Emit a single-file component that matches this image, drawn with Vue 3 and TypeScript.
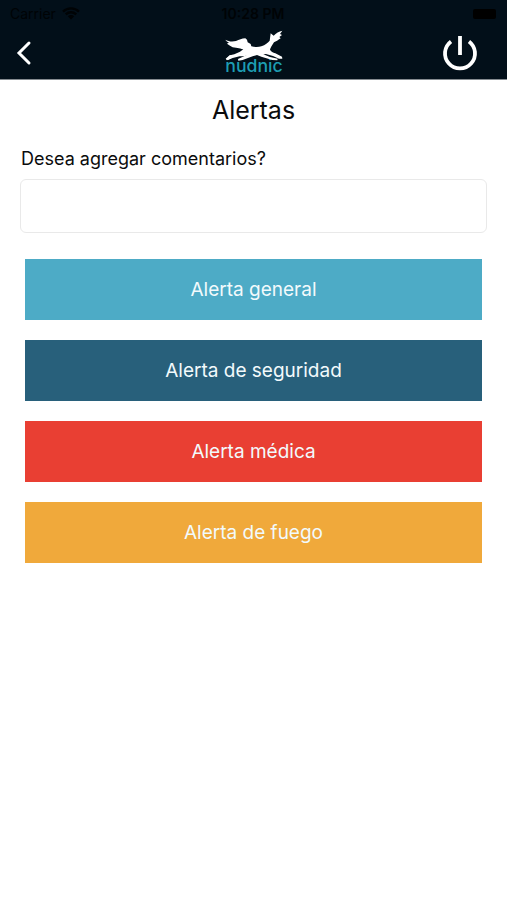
<script setup lang="ts">
import { ref } from 'vue'

interface AlertOption {
  id: string
  label: string
}

const comment = ref<string>('')

const alerts: AlertOption[] = [
  { id: 'general', label: 'Alerta general' },
  { id: 'security', label: 'Alerta de seguridad' },
  { id: 'medical', label: 'Alerta médica' },
  { id: 'fire', label: 'Alerta de fuego' },
]
</script>

<template>
  <div class="screen">
    <header class="header">
      <div class="status">
        <span class="carrier">
          Carrier
          <svg class="wifi" viewBox="0 0 18 13" aria-hidden="true">
            <path d="M1 4.6a11.5 11.5 0 0 1 16 0M3.8 7.4a7.5 7.5 0 0 1 10.4 0" />
            <path class="solid" d="M9 12.6 5.8 9.3a4.6 4.6 0 0 1 6.4 0z" />
          </svg>
        </span>
        <span class="time">10:28 PM</span>
        <span class="battery-slot"><span class="battery"></span></span>
      </div>
      <nav class="nav">
        <button class="icon-button" type="button" aria-label="Volver">
          <svg class="chevron" viewBox="0 0 16 26" aria-hidden="true">
            <path d="M13 3 3 13l10 10" />
          </svg>
        </button>
        <svg class="logo" viewBox="42 26 180 150" role="img" aria-label="nudnic">
          <text class="wordmark" x="132" y="158" text-anchor="middle">nudnic</text>
          <path
            class="fox"
            d="M46 61C56 67 68 67 78 65C88 62 95 57 106 57L111 61L113 69L122 74L124 81C134 84 146 84 154 81C166 77 174 70 179 64L182 42L191 49C198 41 207 36 217 34L210 44L216 47L208 53L212 57C204 63 198 66 192 69C186 78 181 86 180 91C183 97 189 100 196 102L216 112L217 118L207 118L189 110L168 104L160 105L180 113L203 118L202 123L187 122L154 112L141 107C132 110 124 110 117 107C109 109 100 111 89 111L68 116L54 122L48 119L60 108L73 105L90 97L100 90C93 89 88 86 83 86L68 84L60 79L51 73L57 69C52 68 49 66 46 61Z"
          />
          <path class="fox" d="M60 107 47 118 51 123 70 113zM118 103 84 119 85 124 98 122 136 108z" />
        </svg>
        <button class="icon-button" type="button" aria-label="Salir">
          <svg class="power" viewBox="0 0 36 36" aria-hidden="true">
            <path d="M9 6.4a15 15 0 1 0 18 0M18 1v19" />
          </svg>
        </button>
      </nav>
    </header>

    <main class="content">
      <h1 class="title">Alertas</h1>
      <label class="label" for="comment">Desea agregar comentarios?</label>
      <input id="comment" v-model="comment" class="field" type="text" />
      <div class="alerts">
        <button
          v-for="alert in alerts"
          :key="alert.id"
          class="alert"
          :class="alert.id"
          type="button"
        >
          {{ alert.label }}
        </button>
      </div>
    </main>
  </div>
</template>

<style>
body {
  margin: 0;
  background: #fff;
}
</style>

<style scoped>
.screen {
  min-height: 100vh;
  font-family: Inter, 'Liberation Sans', sans-serif;
  color: #0b0b0c;
  background: #fff;
}

.header {
  background: #020f19;
  border-bottom: 1px solid #858b90;
}

.status {
  display: grid;
  grid-template-columns: 1fr auto 1fr;
  align-items: center;
  height: 27px;
  padding: 0 11px 0 10px;
  font-size: 14px;
  color: #000305;
}

.carrier {
  display: flex;
  align-items: center;
  gap: 6px;
}

.wifi {
  width: 18px;
  height: 13px;
  fill: none;
  stroke: currentColor;
  stroke-width: 2.4;
}

.wifi .solid {
  fill: currentColor;
  stroke: none;
}

.time {
  font-weight: 600;
}

.battery-slot {
  display: flex;
  justify-content: flex-end;
}

.battery {
  width: 23px;
  height: 10px;
  border-radius: 2px;
  background: #000;
}

.nav {
  display: grid;
  grid-template-columns: 1fr auto 1fr;
  align-items: center;
  height: 52px;
  padding: 0 29px 0 16px;
}

.icon-button {
  display: flex;
  padding: 0;
  border: 0;
  background: none;
  color: #fff;
  justify-self: start;
}

.icon-button:last-child {
  justify-self: end;
}

.icon-button svg {
  fill: none;
  stroke: currentColor;
}

.chevron {
  width: 16px;
  height: 26px;
  stroke-width: 3;
  stroke-linecap: round;
}

.power {
  width: 36px;
  height: 36px;
  stroke-width: 3.8;
}

.logo {
  width: 60px;
  height: 50px;
  margin-left: 13px;
}

.fox {
  fill: #fff;
}

.wordmark {
  font-family: Inter, sans-serif;
  font-size: 53px;
  font-weight: 500;
  fill: #1d9db2;
}

.content {
  display: flex;
  flex-direction: column;
  padding: 14px 20px 40px;
}

.title {
  margin: 0;
  font-size: 25px;
  line-height: 32px;
  font-weight: 400;
  text-align: center;
}

.label {
  margin-top: 21px;
  padding-left: 1px;
  font-size: 18px;
  line-height: 24px;
}

.field {
  box-sizing: border-box;
  width: 100%;
  height: 54px;
  margin-top: 8px;
  padding: 0 12px;
  border: 1px solid #e9e9e9;
  border-radius: 6px;
  background: #fff;
  font: inherit;
  font-size: 18px;
}

.alerts {
  display: flex;
  flex-direction: column;
  gap: 20px;
  margin-top: 26px;
  padding: 0 5px;
}

.alert {
  height: 61px;
  padding: 0 12px;
  border: 0;
  font: inherit;
  font-size: 19px;
  color: #f2fafc;
}

.general {
  background: #4dabc6;
}

.security {
  background: #28607b;
}

.medical {
  background: #e93f33;
}

.fire {
  background: #f0a93b;
}
</style>
